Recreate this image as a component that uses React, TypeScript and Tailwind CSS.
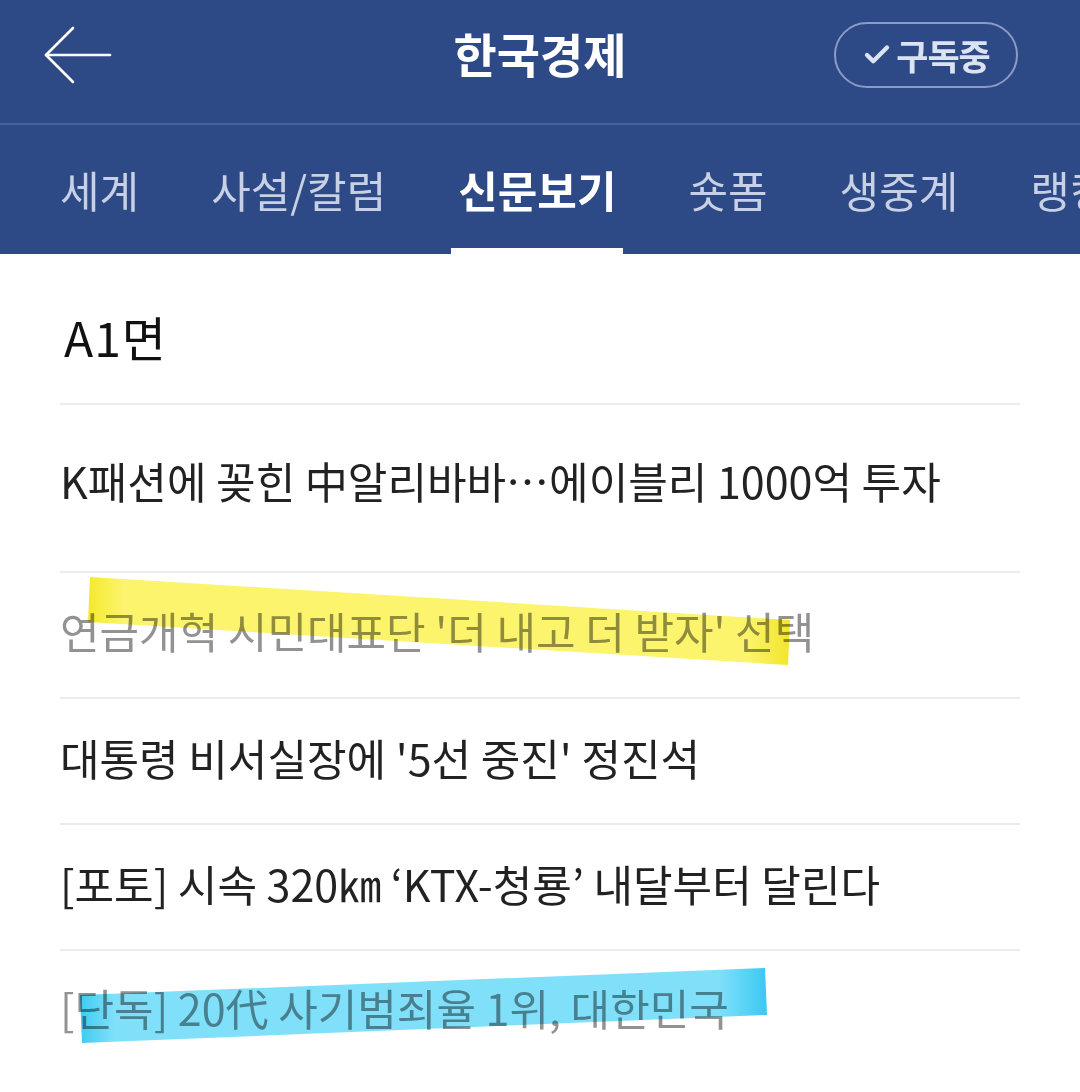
import { Check } from 'lucide-react';

const tabs = ['세계', '사설/칼럼', '신문보기', '숏폼', '생중계', '랭킹'];

const rows = [
  { title: 'K패션에 꽂힌 中알리바바…에이블리 1000억 투자', read: false, h: 'h-[166px]', pt: 'pt-[43px]' },
  { title: "연금개혁 시민대표단 '더 내고 더 받자' 선택", read: true, h: 'h-[124px]', pt: 'pt-[25px]', mark: 'yellow' },
  { title: "대통령 비서실장에 '5선 중진' 정진석", read: false, h: 'h-[124px]', pt: 'pt-[26px]' },
  { title: '[포토] 시속 320㎞ ‘KTX-청룡’ 내달부터 달린다', read: false, h: 'h-[124px]', pt: 'pt-[26px]' },
  { title: '[단독] 20代 사기범죄율 1위, 대한민국', read: true, h: 'h-[141px]', pt: 'pt-[24px]', mark: 'blue' },
];

const Marker = ({ kind }: { kind: string }) => {
  if (kind === 'yellow') {
    return (
      <svg className="absolute left-0 top-0 pointer-events-none mix-blend-multiply" width="1080" height="124">
        <defs>
          <linearGradient id="yl" x1="0" x2="1" y1="0" y2="0">
            <stop offset="0" stopColor="#f5e92c" />
            <stop offset="0.05" stopColor="#fbf46c" />
            <stop offset="0.94" stopColor="#fbf46c" />
            <stop offset="1" stopColor="#f3e52a" />
          </linearGradient>
        </defs>
        <polygon points="90,4 790,47 788,92 88,49" fill="url(#yl)" />
      </svg>
    );
  }
  return (
    <svg className="absolute left-0 top-0 pointer-events-none mix-blend-multiply" width="1080" height="141">
      <defs>
        <linearGradient id="bl" x1="0" x2="1" y1="0" y2="0">
          <stop offset="0" stopColor="#3ccbf3" />
          <stop offset="0.05" stopColor="#80e0fa" />
          <stop offset="0.93" stopColor="#80e0fa" />
          <stop offset="1" stopColor="#3ac8f2" />
        </linearGradient>
      </defs>
      <polygon points="80,44 765,17 767,64 82,92" fill="url(#bl)" />
    </svg>
  );
};

export default function App() {
  return (
    <div
      className="w-[1080px] h-[1092px] overflow-hidden bg-white"
      style={{ fontFamily: '"Noto Sans CJK KR", "Noto Sans", sans-serif' }}
    >
      {/* Top bar */}
      <div className="h-[123px] bg-[#2e4a86] flex items-center justify-between pl-[44px] pr-[62px] pb-[14px] relative">
        <svg width="68" height="58" viewBox="0 0 68 58" fill="none" stroke="white" strokeWidth="2.6" strokeLinecap="round" strokeLinejoin="round">
          <path d="M2 29H66" />
          <path d="M29 2L2 29L29 56" />
        </svg>
        <h1 className="absolute left-1/2 top-[4px] -translate-x-1/2 text-white text-[47px] font-bold leading-[98px]">한국경제</h1>
        <button className="w-[184px] h-[66px] rounded-full border-2 border-[#8a9bc6] flex items-center justify-center gap-[4px] text-[#dbe2f1]">
          <Check size={30} strokeWidth={3.5} />
          <span className="text-[35px] font-bold tracking-[-1px] leading-none">구독중</span>
        </button>
      </div>
      <div className="h-[2px] bg-[#4761a0]" />

      {/* Tabs */}
      <div className="h-[129px] bg-[#2e4a86] flex items-stretch pl-[53px] gap-[58px] whitespace-nowrap overflow-hidden">
        {tabs.map((t) => {
          const active = t === '신문보기';
          return (
            <div key={t} className="relative flex items-center px-[7px] shrink-0">
              <span
                className={
                  active
                    ? 'text-white text-[43px] font-bold'
                    : 'text-[#c7d0e4] text-[43px]'
                }
              >
                {t}
              </span>
              {active && <div className="absolute left-0 right-0 bottom-0 h-[6px] bg-white" />}
            </div>
          );
        })}
      </div>

      {/* Section title */}
      <div className="h-[149px] flex items-center pl-[64px] pt-[14px]">
        <span className="text-[48px] text-[#111] tracking-[1px]">A1면</span>
      </div>

      {rows.map((r) => (
        <div key={r.title}>
          <div className="mx-[60px] h-[2px] bg-[#ececec]" />
          <div className={`${r.h} relative flex items-start`}>
            <span
              className={
                (r.read ? 'text-[#929292]' : 'text-[#222]') +
                ' text-[43px] pl-[60px] whitespace-nowrap ' +
                r.pt
              }
            >
              {r.title}
            </span>
            {r.mark && <Marker kind={r.mark} />}
          </div>
        </div>
      ))}
    </div>
  );
}
